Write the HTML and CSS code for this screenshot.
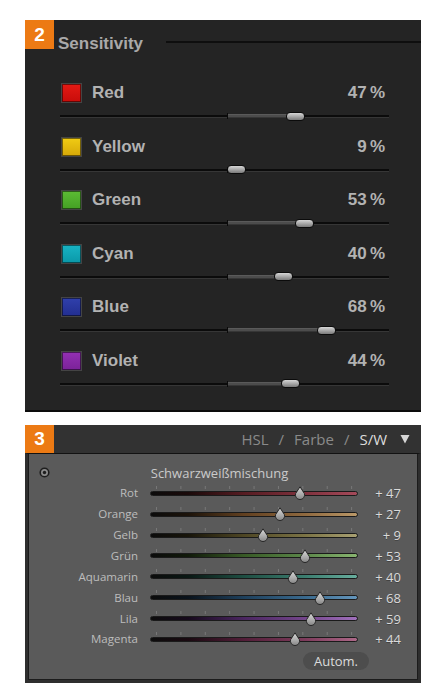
FILE: index.html
```html
<!DOCTYPE html>
<html lang="de">
<head>
<meta charset="utf-8">
<title>Sensitivity / Schwarzweißmischung</title>
<link rel="stylesheet" href="styles.css">
</head>
<body>
<svg class="defs" width="0" height="0" aria-hidden="true">
  <defs>
    <linearGradient id="tipg" x1="0" y1="0" x2="0" y2="1">
      <stop offset="0" stop-color="#d8d8d8"/>
      <stop offset="0.6" stop-color="#aaaaaa"/>
      <stop offset="1" stop-color="#858585"/>
    </linearGradient>
  </defs>
</svg>

<section class="sens">
  <header class="sens-head">
    <span class="badge">2</span>
    <h2 class="sens-title">Sensitivity</h2>
    <span class="rule"></span>
  </header>
  <div class="rows">
    <div class="row">
      <div class="row-top"><span class="swatch red"></span><span class="name">Red</span><span class="val">47 %</span></div>
      <div class="slider"><span class="fill" style="width:68.5px"></span><span class="mid"></span><span class="knob" style="left:235.5px"></span></div>
    </div>
    <div class="row">
      <div class="row-top"><span class="swatch yellow"></span><span class="name">Yellow</span><span class="val">9 %</span></div>
      <div class="slider"><span class="fill" style="width:9.7px"></span><span class="mid"></span><span class="knob" style="left:176.7px"></span></div>
    </div>
    <div class="row">
      <div class="row-top"><span class="swatch green"></span><span class="name">Green</span><span class="val">53 %</span></div>
      <div class="slider"><span class="fill" style="width:77.5px"></span><span class="mid"></span><span class="knob" style="left:244.5px"></span></div>
    </div>
    <div class="row">
      <div class="row-top"><span class="swatch cyan"></span><span class="name">Cyan</span><span class="val">40 %</span></div>
      <div class="slider"><span class="fill" style="width:56.5px"></span><span class="mid"></span><span class="knob" style="left:223.5px"></span></div>
    </div>
    <div class="row">
      <div class="row-top"><span class="swatch blue"></span><span class="name">Blue</span><span class="val">68 %</span></div>
      <div class="slider"><span class="fill" style="width:99px"></span><span class="mid"></span><span class="knob" style="left:266px"></span></div>
    </div>
    <div class="row">
      <div class="row-top"><span class="swatch violet"></span><span class="name">Violet</span><span class="val">44 %</span></div>
      <div class="slider"><span class="fill" style="width:63px"></span><span class="mid"></span><span class="knob" style="left:230px"></span></div>
    </div>
  </div>
</section>

<section class="sw">
  <header class="sw-head">
    <span class="badge badge3">3</span>
    <nav class="tabs">
      <span>HSL</span><span>/</span><span>Farbe</span><span>/</span><span class="on">S/W</span>
      <svg class="caret" width="10" height="10" viewBox="0 0 10 10"><path d="M0.5 1 H9.5 L5 9.5 Z" fill="#d6d6d6"/></svg>
    </nav>
  </header>
  <div class="sw-body">
    <div class="title-row">
      <svg class="target" width="11" height="11" viewBox="0 0 11 11"><circle cx="5.5" cy="5.5" r="4.3" fill="#8a8a8a" stroke="#1e1e1e" stroke-width="1.6"/><circle cx="5.5" cy="5.5" r="1.7" fill="#1e1e1e"/></svg>
      <span class="mix-title">Schwarzweißmischung</span>
    </div>

    <div class="mix-row rot"><span class="lab">Rot</span><span class="trk"><span class="bar"></span><span class="tip" style="left:150px"><svg width="12" height="14" viewBox="0 0 12 14"><path d="M6 .8 L10.4 7.6 A4.6 4.6 0 1 1 1.6 7.6 Z" fill="url(#tipg)" stroke="#262626" stroke-width="1"/></svg></span></span><span class="num">+ 47</span></div>
    <div class="mix-row orange"><span class="lab">Orange</span><span class="trk"><span class="bar"></span><span class="tip" style="left:130px"><svg width="12" height="14" viewBox="0 0 12 14"><path d="M6 .8 L10.4 7.6 A4.6 4.6 0 1 1 1.6 7.6 Z" fill="url(#tipg)" stroke="#262626" stroke-width="1"/></svg></span></span><span class="num">+ 27</span></div>
    <div class="mix-row gelb"><span class="lab">Gelb</span><span class="trk"><span class="bar"></span><span class="tip" style="left:113px"><svg width="12" height="14" viewBox="0 0 12 14"><path d="M6 .8 L10.4 7.6 A4.6 4.6 0 1 1 1.6 7.6 Z" fill="url(#tipg)" stroke="#262626" stroke-width="1"/></svg></span></span><span class="num">+ 9</span></div>
    <div class="mix-row gruen"><span class="lab">Grün</span><span class="trk"><span class="bar"></span><span class="tip" style="left:155px"><svg width="12" height="14" viewBox="0 0 12 14"><path d="M6 .8 L10.4 7.6 A4.6 4.6 0 1 1 1.6 7.6 Z" fill="url(#tipg)" stroke="#262626" stroke-width="1"/></svg></span></span><span class="num">+ 53</span></div>
    <div class="mix-row aqua"><span class="lab">Aquamarin</span><span class="trk"><span class="bar"></span><span class="tip" style="left:143px"><svg width="12" height="14" viewBox="0 0 12 14"><path d="M6 .8 L10.4 7.6 A4.6 4.6 0 1 1 1.6 7.6 Z" fill="url(#tipg)" stroke="#262626" stroke-width="1"/></svg></span></span><span class="num">+ 40</span></div>
    <div class="mix-row blau"><span class="lab">Blau</span><span class="trk"><span class="bar"></span><span class="tip" style="left:170px"><svg width="12" height="14" viewBox="0 0 12 14"><path d="M6 .8 L10.4 7.6 A4.6 4.6 0 1 1 1.6 7.6 Z" fill="url(#tipg)" stroke="#262626" stroke-width="1"/></svg></span></span><span class="num">+ 68</span></div>
    <div class="mix-row lila"><span class="lab">Lila</span><span class="trk"><span class="bar"></span><span class="tip" style="left:161px"><svg width="12" height="14" viewBox="0 0 12 14"><path d="M6 .8 L10.4 7.6 A4.6 4.6 0 1 1 1.6 7.6 Z" fill="url(#tipg)" stroke="#262626" stroke-width="1"/></svg></span></span><span class="num">+ 59</span></div>
    <div class="mix-row magenta"><span class="lab">Magenta</span><span class="trk"><span class="bar"></span><span class="tip" style="left:145px"><svg width="12" height="14" viewBox="0 0 12 14"><path d="M6 .8 L10.4 7.6 A4.6 4.6 0 1 1 1.6 7.6 Z" fill="url(#tipg)" stroke="#262626" stroke-width="1"/></svg></span></span><span class="num">+ 44</span></div>

    <div class="btn-row"><span class="autom">Autom.</span></div>
  </div>
</section>
</body>
</html>
```

FILE: styles.css
```css
* { box-sizing: border-box; margin: 0; padding: 0; }

body {
  background: #ffffff;
  padding: 20px 21px 14px 25px;
  font-family: "Liberation Sans", Arial, sans-serif;
}

.defs { position: absolute; width: 0; height: 0; overflow: hidden; }

/* ---------- Panel 2 : Sensitivity ---------- */
.sens {
  background: #242424;
  border-bottom: 2px solid #0c0c0c;
}

.sens-head {
  display: flex;
  align-items: flex-end;
  height: 29px;
}

.badge {
  width: 29px;
  height: 29px;
  flex: none;
  background: #ec7a14;
  color: #ffffff;
  font: bold 19px/1 "Liberation Sans", Arial, sans-serif;
  display: flex;
  align-items: center;
  justify-content: center;
}

.sens-title {
  margin-left: 4px;
  margin-bottom: -3px;
  font: bold 17px/17px "Liberation Sans", Arial, sans-serif;
  color: #a9a9a9;
}

.rule {
  flex: 1;
  align-self: flex-start;
  margin-top: 21px;
  margin-left: 23px;
  height: 2px;
  background: #0e0e0e;
}

.rows {
  padding: 32px 32px 7.4px 35px;
}

.row { height: 53.6px; }

.row-top {
  display: flex;
  align-items: center;
  height: 24px;
}

.swatch {
  width: 21px;
  height: 20px;
  margin-left: 1px;
  border: 1px solid #444444;
  box-shadow: inset 0 0 0 1px rgba(0, 0, 0, 0.5);
}
.swatch.red    { background: linear-gradient(#e41a14, #c80c0a); }
.swatch.yellow { background: linear-gradient(#f0cc14, #d6a808); }
.swatch.green  { background: linear-gradient(#5cbc34, #44a024); }
.swatch.cyan   { background: linear-gradient(#18b4c4, #0a98a8); }
.swatch.blue   { background: linear-gradient(#3040ac, #222e90); }
.swatch.violet { background: linear-gradient(#9430b4, #7a2298); }

.name {
  margin-left: 10px;
  font: bold 17px/24px "Liberation Sans", Arial, sans-serif;
  color: #b2b2b2;
}

.val {
  margin-left: auto;
  margin-right: 4px;
  font: bold 17px/24px "Liberation Sans", Arial, sans-serif;
  color: #b2b2b2;
  word-spacing: -1.5px;
}

.slider {
  position: relative;
  height: 10px;
  margin-top: 6px;
}
.slider::before {
  content: "";
  position: absolute;
  left: 0;
  right: 0;
  top: 4px;
  height: 2px;
  background: #0b0b0b;
  box-shadow: 0 1px 0 #363636;
}
.fill {
  position: absolute;
  left: 167px;
  top: 3px;
  height: 3px;
  background: #4c4c4c;
  border-top: 1px solid #5a5a5a;
}
.mid {
  position: absolute;
  left: 167px;
  top: 2px;
  width: 1px;
  height: 6px;
  background: #0a0a0a;
}
.knob {
  position: absolute;
  top: 0.5px;
  width: 19px;
  height: 9px;
  margin-left: -9.5px;
  border: 1px solid #0b0b0b;
  border-radius: 4px;
  background: linear-gradient(#d6d6d6, #a4a4a4 55%, #7a7a7a);
}

/* ---------- Panel 3 : S/W ---------- */
.sw { margin-top: 13px; }

.sw-head {
  display: flex;
  align-items: center;
  height: 28px;
  background: #323232;
}

.badge3 { height: 28px; }

.tabs {
  margin-left: auto;
  display: flex;
  align-items: center;
  gap: 10px;
  padding-right: 11px;
  font: 15px/28px "Open Sans", "Liberation Sans", sans-serif;
  color: #8a8a8a;
}
.tabs .on { color: #dcdcdc; }
.caret { margin-left: 3px; }

.sw-body {
  background: #5a5a5a;
  border: 3px solid #2e2e2e;
  border-top: 1px solid #121212;
  box-shadow: inset 1px 0 0 #1c1c1c, inset -1px 0 0 #1c1c1c, inset 0 -1px 0 #1c1c1c;
  padding: 9px 17px 9.6px 0;
}

.title-row {
  display: grid;
  grid-template-columns: 32px 1fr 22px;
  align-items: center;
  height: 20px;
}
.target { justify-self: center; }
.mix-title {
  text-align: center;
  font: 13px/20px "Open Sans", "Liberation Sans", sans-serif;
  color: #cacaca;
}

.mix-row {
  display: grid;
  grid-template-columns: 122px 208px 1fr;
  align-items: center;
  height: 20.86px;
}
.lab {
  text-align: right;
  padding-right: 12px;
  font: 11.5px/20px "Open Sans", "Liberation Sans", sans-serif;
  color: #bdbdbd;
}
.num {
  text-align: right;
  font: 13px/20px "Open Sans", "Liberation Sans", sans-serif;
  color: #dadada;
  text-shadow: 0 1px 0 rgba(0, 0, 0, 0.25);
}

.trk {
  position: relative;
  height: 20.86px;
  display: flex;
  align-items: center;
}
.trk::before {
  content: "";
  position: absolute;
  left: 5.5px;
  right: 0;
  top: 3px;
  height: 3px;
  background: linear-gradient(to right, rgba(150, 150, 150, 0.5) 1px, transparent 1px) 0 0 / 24.4px 100% repeat-x;
}
.bar {
  width: 100%;
  height: 5px;
  border-radius: 3px;
  border: 1px solid #1a1a1a;
}
.tip {
  position: absolute;
  top: 3.5px;
  margin-left: -6px;
  width: 12px;
  height: 14px;
  line-height: 0;
}

.rot .bar     { background: linear-gradient(to right, #0c0c0c, #1a0a0a 18%, #561c22 45%, #80323e 75%, #a44a5a); }
.orange .bar  { background: linear-gradient(to right, #0c0c0c, #1c130a 18%, #624020 45%, #906a40 75%, #ba9868); }
.gelb .bar    { background: linear-gradient(to right, #0c0c0c, #18150a 18%, #4e4624 45%, #7c7446 75%, #a8a072); }
.gruen .bar   { background: linear-gradient(to right, #0c0c0c, #111a0a 18%, #385a26 45%, #5c884a 75%, #88b470); }
.aqua .bar    { background: linear-gradient(to right, #0c0c0c, #0a1814 18%, #1e4e42 45%, #3c7e70 75%, #68ae9e); }
.blau .bar    { background: linear-gradient(to right, #0c0c0c, #0a131c 18%, #1e405c 45%, #3a6a8e 75%, #6496bc); }
.lila .bar    { background: linear-gradient(to right, #0c0c0c, #160a1c 18%, #4a2660 45%, #74468c 75%, #a070bc); }
.magenta .bar { background: linear-gradient(to right, #0c0c0c, #1a0a11 18%, #521e38 45%, #7e3c5c 75%, #ac6888); }

.btn-row {
  display: flex;
  justify-content: flex-end;
  padding-right: 32px;
  margin-top: 2.5px;
}
.autom {
  width: 66px;
  height: 18px;
  border-radius: 9px;
  background: #4d4d4d;
  text-align: center;
  font: 13px/18px "Open Sans", "Liberation Sans", sans-serif;
  color: #dcdcdc;
}
```
